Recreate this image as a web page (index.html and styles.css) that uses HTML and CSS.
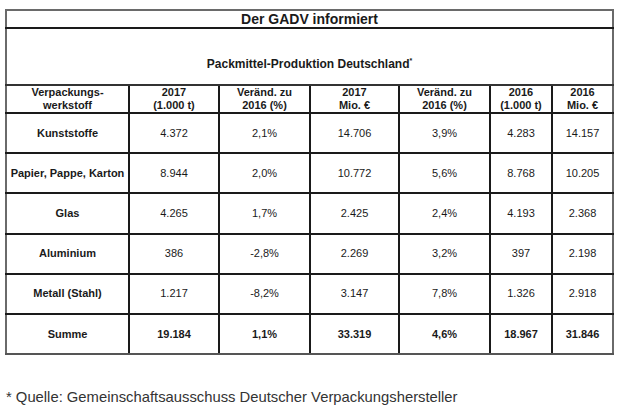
FILE: index.html
```html
<!DOCTYPE html>
<html lang="de">
<head>
<meta charset="utf-8">
<link rel="stylesheet" href="styles.css">
</head>
<body>
<div class="page">
  <table class="stats">
    <colgroup>
      <col class="c1"><col class="c2"><col class="c3"><col class="c4"><col class="c5"><col class="c6"><col class="c7">
    </colgroup>
    <tr class="title-row"><td colspan="7">Der GADV informiert</td></tr>
    <tr class="sub-row"><td colspan="7">Packmittel-Produktion Deutschland<sup>*</sup></td></tr>
    <tr class="head-row">
      <th>Verpackungs-<br>werkstoff</th>
      <th>2017<br>(1.000 t)</th>
      <th>Veränd. zu<br>2016 (%)</th>
      <th>2017<br>Mio. €</th>
      <th>Veränd. zu<br>2016 (%)</th>
      <th>2016<br>(1.000 t)</th>
      <th>2016<br>Mio. €</th>
    </tr>
    <tr class="data-row"><th>Kunststoffe</th><td>4.372</td><td>2,1%</td><td>14.706</td><td>3,9%</td><td>4.283</td><td>14.157</td></tr>
    <tr class="data-row"><th>Papier, Pappe, Karton</th><td>8.944</td><td>2,0%</td><td>10.772</td><td>5,6%</td><td>8.768</td><td>10.205</td></tr>
    <tr class="data-row"><th>Glas</th><td>4.265</td><td>1,7%</td><td>2.425</td><td>2,4%</td><td>4.193</td><td>2.368</td></tr>
    <tr class="data-row"><th>Aluminium</th><td>386</td><td>-2,8%</td><td>2.269</td><td>3,2%</td><td>397</td><td>2.198</td></tr>
    <tr class="data-row"><th>Metall (Stahl)</th><td>1.217</td><td>-8,2%</td><td>3.147</td><td>7,8%</td><td>1.326</td><td>2.918</td></tr>
    <tr class="data-row sum-row"><th>Summe</th><td>19.184</td><td>1,1%</td><td>33.319</td><td>4,6%</td><td>18.967</td><td>31.846</td></tr>
  </table>
  <p class="source">* Quelle: Gemeinschaftsausschuss Deutscher Verpackungshersteller</p>
</div>
</body>
</html>
```

FILE: styles.css
```css
html, body {
  margin: 0;
  padding: 0;
  background: #ffffff;
}

.page {
  padding: 9px 0 0 5px;
  font-family: "Liberation Sans", Arial, sans-serif;
  color: #1a1a1a;
}

.stats {
  border-collapse: collapse;
  width: 609px;
  table-layout: fixed;
  border: 2px solid #6a6a6a;
}

.c1 { width: 123px; }
.c2 { width: 90px; }
.c3 { width: 91px; }
.c4 { width: 89px; }
.c5 { width: 91px; }
.c6 { width: 62px; }
.c7 { width: 61px; }

.stats td, .stats th {
  border: 2px solid #1a1a1a;
  text-align: center;
  vertical-align: middle;
  padding: 0;
  font-size: 11px;
  line-height: 13px;
}

.stats .title-row td {
  height: 16px;
  font-size: 14px;
  font-weight: bold;
  line-height: 16px;
  border-top-color: #6a6a6a;
  border-left-color: #6a6a6a;
  border-right-color: #6a6a6a;
}

.stats .sub-row td {
  height: 57px;
  box-sizing: border-box;
  font-size: 12px;
  font-weight: bold;
  vertical-align: bottom;
  padding-bottom: 13px;
  border-left-color: #6a6a6a;
  border-right-color: #6a6a6a;
  border-bottom-color: #333;
}

.stats .sub-row sup {
  font-size: 7px;
  vertical-align: 5px;
}

.stats .head-row th {
  height: 26px;
  font-weight: bold;
}

.stats .data-row th,
.stats .data-row td {
  height: 38.2px;
}

.stats .data-row th {
  font-weight: bold;
}

.stats .data-row td {
  font-weight: normal;
}

.stats .sum-row td {
  font-weight: bold;
}

.stats .sum-row th,
.stats .sum-row td {
  border-bottom-color: #555;
}

.stats tr > :first-child { border-left-color: #6a6a6a; }
.stats tr > :last-child { border-right-color: #6a6a6a; }

.source {
  margin: 34px 0 0 1px;
  font-size: 14.8px;
  color: #333;
}
```
